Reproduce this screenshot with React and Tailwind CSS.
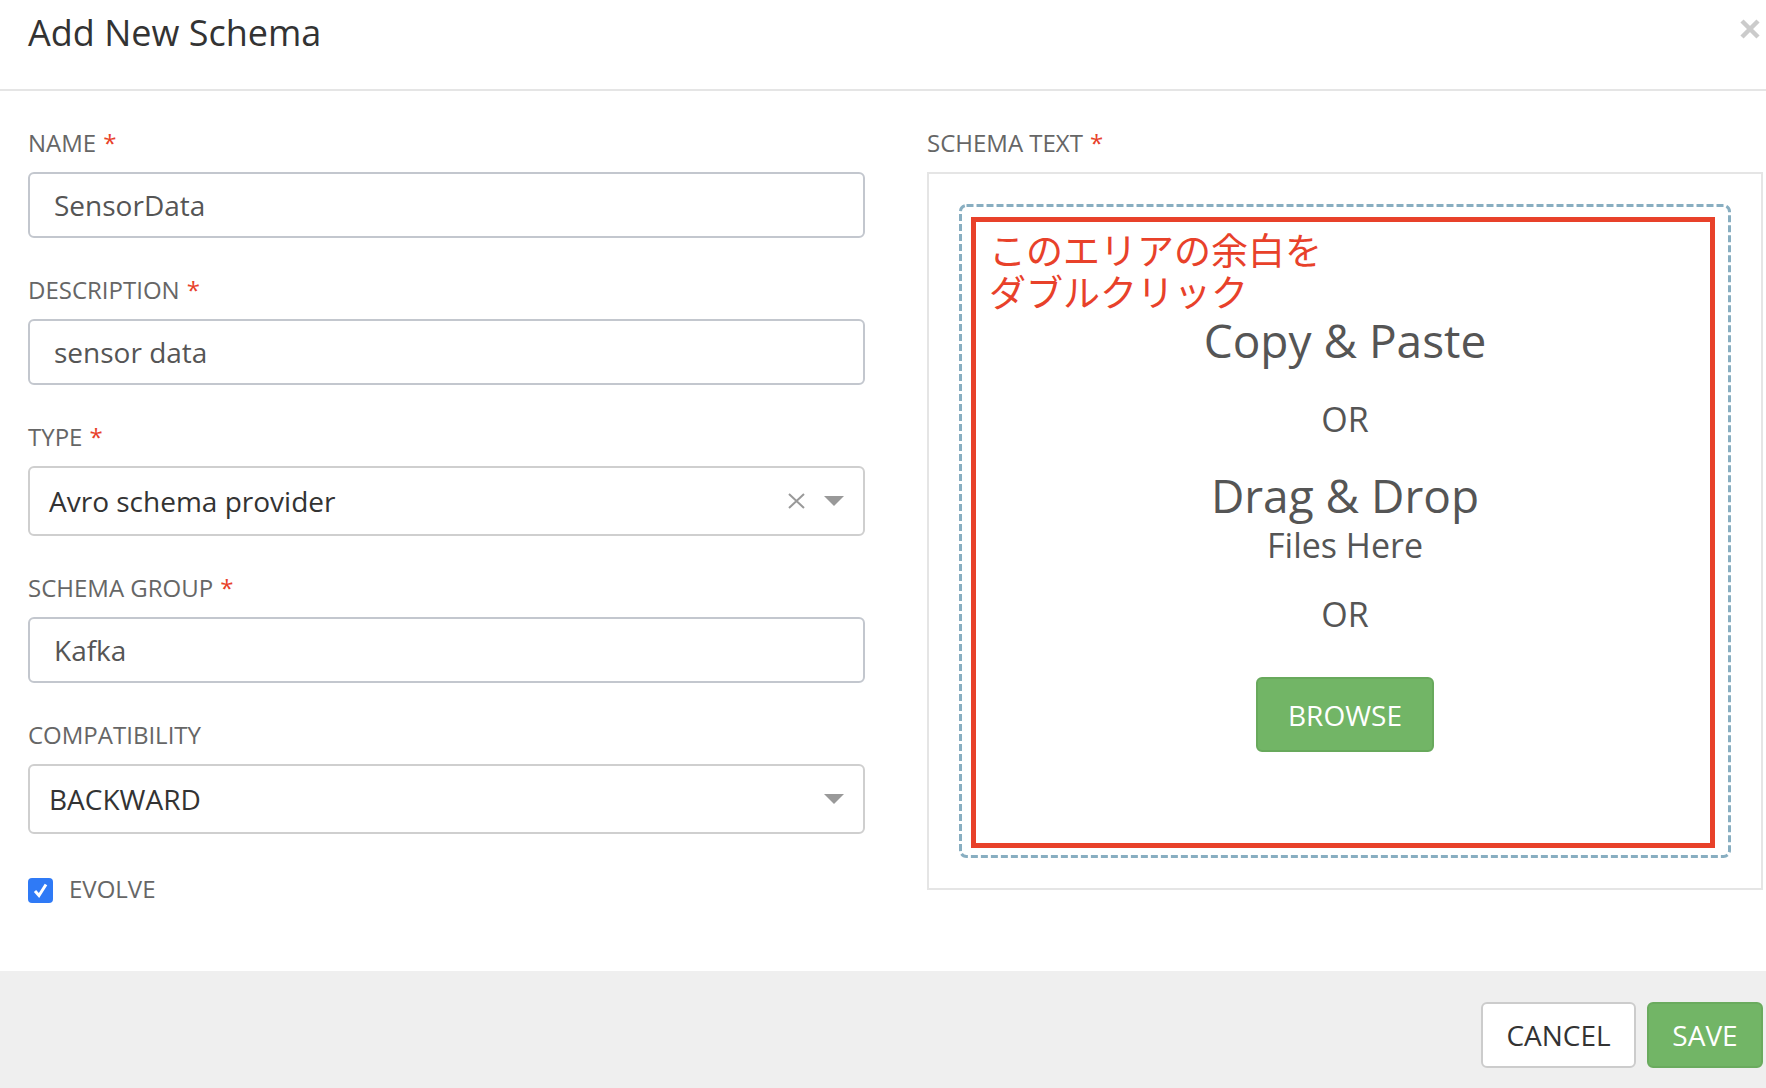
import React from 'react';

const Label = ({ text, required }) => (
  <div className="h-[32px] leading-[32px] text-[24px] text-[#666] mb-[13px] whitespace-nowrap">
    {text}
    {required && <span className="text-[#e8412a] ml-[7px]">*</span>}
  </div>
);

const TextInput = ({ value }) => (
  <div className="h-[66px] border-2 border-[#c3c7ce] rounded-[6px] px-[24px] flex items-center text-[28px] text-[#555]">
    {value}
  </div>
);

const Caret = () => (
  <svg width="20" height="10" viewBox="0 0 20 10">
    <path d="M0 0 L20 0 L10 10 Z" fill="#999" />
  </svg>
);

const Select = ({ value, clearable }) => (
  <div className="h-[70px] border-2 border-[#cfcfcf] rounded-[6px] pl-[19px] pr-[19px] flex items-center text-[28px] text-[#333]">
    <span className="flex-1">{value}</span>
    {clearable && (
      <svg width="17" height="16" viewBox="0 0 17 16" className="mr-[19px]">
        <path d="M1 1 L16 15 M16 1 L1 15" stroke="#999" strokeWidth="2" />
      </svg>
    )}
    <Caret />
  </div>
);

const Field = ({ label, required, children }) => (
  <div className="mb-[36px]">
    <Label text={label} required={required} />
    {children}
  </div>
);

export default function App() {
  return (
    <div className="w-[1766px] h-[1088px] bg-white flex flex-col overflow-hidden font-['Open_Sans','Noto_Sans_CJK_JP',sans-serif]">
      {/* Header */}
      <div className="relative h-[91px] shrink-0 border-b-2 border-[#e5e5e5] pl-[28px] pt-[9px]">
        <h4 className="text-[36px] leading-[48px] text-[#333]">Add New Schema</h4>
        <button className="absolute right-[6px] top-[19px] w-[20px] h-[20px]">
          <svg width="20" height="20" viewBox="0 0 20 20">
            <path d="M2 2 L18 18 M18 2 L2 18" stroke="#cbcbcb" strokeWidth="4.5" />
          </svg>
        </button>
      </div>

      {/* Body */}
      <div className="flex-1 flex pl-[28px] pr-[3px] pt-[36px] gap-[62px]">
        {/* Left column */}
        <div className="w-[837px] flex flex-col">
          <Field label="NAME" required>
            <TextInput value="SensorData" />
          </Field>
          <Field label="DESCRIPTION" required>
            <TextInput value="sensor data" />
          </Field>
          <Field label="TYPE" required>
            <Select value="Avro schema provider" clearable />
          </Field>
          <Field label="SCHEMA GROUP" required>
            <TextInput value="Kafka" />
          </Field>
          <div className="mb-[39px]">
            <Label text="COMPATIBILITY" />
            <Select value="BACKWARD" />
          </div>
          <div className="flex items-center gap-[16px]">
            <div className="w-[25px] h-[25px] rounded-[4px] bg-[#2f7af6] flex items-center justify-center mt-[3px]">
              <svg width="17" height="17" viewBox="0 0 17 17">
                <path d="M3 9 L7 13.5 L14 2.5" stroke="white" strokeWidth="3" fill="none" />
              </svg>
            </div>
            <span className="text-[24px] text-[#666] leading-[32px]">EVOLVE</span>
          </div>
        </div>

        {/* Right column */}
        <div className="w-[836px] flex flex-col">
          <Label text="SCHEMA TEXT" required />
          <div className="h-[718px] border-2 border-[#e5e5e5] p-[30px] flex flex-col">
            <div className="relative w-[772px] h-[654px] flex flex-col items-center pt-[108px] text-[#555]">
              {/* dashed drop zone frame */}
              <svg width="772" height="654" className="absolute left-0 top-0 pointer-events-none">
                <rect x="1.5" y="1.5" width="769" height="651" rx="6" fill="none" stroke="#88aec1" strokeWidth="3" strokeDasharray="7 3" />
              </svg>
              {/* annotation */}
              <div className="absolute left-[12px] top-[13px] right-[16px] bottom-[10px] border-[5px] border-[#e8412a] pointer-events-none" />
              <div className="absolute left-[30px] top-[24px] text-[37px] text-[#e8412a] font-['Noto_Sans_CJK_JP',sans-serif]">
                <div className="leading-[42px]">このエリアの余白を</div>
                <div className="leading-[42px]">ダブルクリック</div>
              </div>

              <div className="text-[46px] leading-[56px]">Copy &amp; Paste</div>
              <div className="text-[34px] leading-[40px] mt-[31px]">OR</div>
              <div className="text-[46px] leading-[56px] mt-[28px]">Drag &amp; Drop</div>
              <div className="text-[34px] leading-[40px] mt-[2px]">Files Here</div>
              <div className="text-[34px] leading-[40px] mt-[29px]">OR</div>
              <button className="mt-[43px] w-[178px] h-[75px] bg-[#72b566] border-2 border-[#68a95c] rounded-[6px] text-white text-[28px]">
                BROWSE
              </button>
            </div>
          </div>
        </div>
      </div>

      {/* Footer */}
      <div className="h-[117px] shrink-0 bg-[#efefef] flex justify-end items-start pt-[31px] pr-[3px] gap-[11px]">
        <button className="w-[155px] h-[66px] bg-white border-2 border-[#cccccc] rounded-[6px] text-[28px] text-[#333]">
          CANCEL
        </button>
        <button className="w-[116px] h-[66px] bg-[#72b566] border-2 border-[#6aab5e] rounded-[6px] text-[28px] text-white">
          SAVE
        </button>
      </div>
    </div>
  );
}
